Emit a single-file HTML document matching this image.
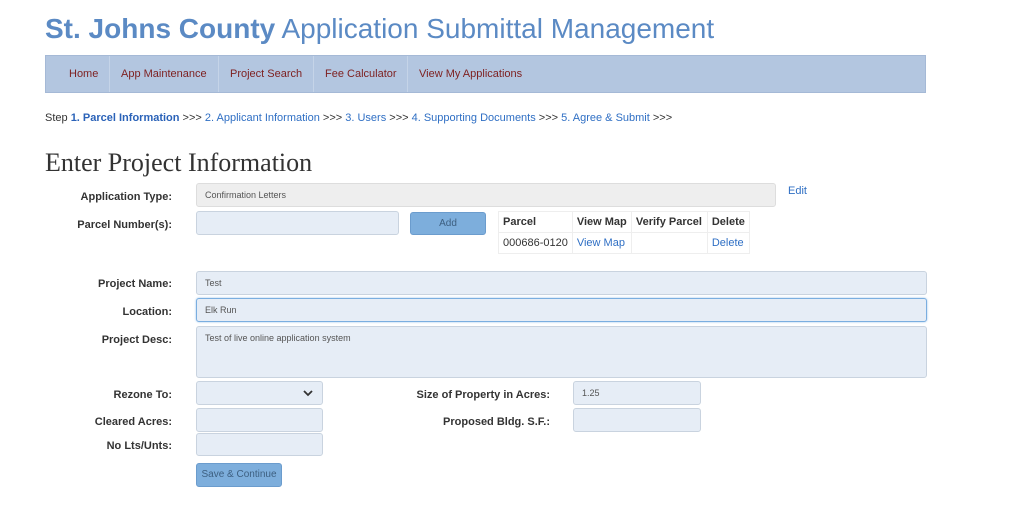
<!DOCTYPE html>
<html><head><style>
body{margin:0;width:1024px;height:507px;background:#fff;font-family:"Liberation Sans",sans-serif;position:relative;overflow:hidden}
.a{position:absolute}
.t{left:45px;top:13px;font-size:28px;color:#5b8ac4;white-space:nowrap}
.nav{left:45px;top:55px;width:881px;height:38px;background:#b3c6e0;border:1px solid #a5b9d6;box-sizing:border-box}
.nav span{position:absolute;top:12px;font-size:11px;color:#7d1f1f;white-space:nowrap}
.sep{position:absolute;top:0;width:1px;height:36px;background:#c5d4e8}
.st{left:45px;top:112px;font-size:11px;color:#333;white-space:nowrap}
.st b{color:#2a62b8}.st i{font-style:normal;color:#2f6fc4}
h1{position:absolute;left:45px;top:148px;margin:0;font:26px "Liberation Serif",serif;color:#333;white-space:nowrap}
.l{font-size:11px;font-weight:bold;color:#333;text-align:right;width:160px}
.in{background:#e6edf6;border:1px solid #c9d3df;border-radius:3px;box-sizing:border-box;font-size:9px;color:#555;padding:6px 8px}
.btn{background:#7daedc;border:1px solid #6b9ccd;border-radius:3px;box-sizing:border-box;font-size:10px;color:#3d5f80;text-align:center}
table{border-collapse:collapse;font-size:11px;white-space:nowrap}
td{border:1px solid #eee;padding:0 4px;height:20px;color:#333}
.lk{color:#2f6fc4}
</style></head><body>
<div class="a t"><b>St. Johns County</b> Application Submittal Management</div>
<div class="a nav">
<span style="left:23px">Home</span><div class="sep" style="left:63px"></div>
<span style="left:75px">App Maintenance</span><div class="sep" style="left:172px"></div>
<span style="left:184px">Project Search</span><div class="sep" style="left:267px"></div>
<span style="left:279px">Fee Calculator</span><div class="sep" style="left:361px"></div>
<span style="left:373px">View My Applications</span>
</div>
<div class="a st">Step <b>1. Parcel Information</b> &gt;&gt;&gt; <i>2. Applicant Information</i> &gt;&gt;&gt; <i>3. Users</i> &gt;&gt;&gt; <i>4. Supporting Documents</i> &gt;&gt;&gt; <i>5. Agree &amp; Submit</i> &gt;&gt;&gt;</div>
<h1>Enter Project Information</h1>
<div class="a l" style="left:12px;top:191px">Application Type:</div>
<div class="a in" style="left:196px;top:183px;width:580px;height:24px;background:#eee;border-color:#ddd">Confirmation Letters</div>
<div class="a lk" style="left:788px;top:185px;font-size:11px">Edit</div>
<div class="a l" style="left:12px;top:219px">Parcel Number(s):</div>
<div class="a in" style="left:196px;top:211px;width:203px;height:24px"></div>
<div class="a btn" style="left:410px;top:212px;width:76px;height:23px;line-height:21px">Add</div>
<table class="a" style="left:498px;top:211px">
<tr><td style="width:64px"><b>Parcel</b></td><td style="width:50px"><b>View Map</b></td><td style="width:67px"><b>Verify Parcel</b></td><td style="width:32px"><b>Delete</b></td></tr>
<tr><td>000686-0120</td><td class="lk">View Map</td><td></td><td class="lk">Delete</td></tr>
</table>
<div class="a l" style="left:12px;top:278px">Project Name:</div>
<div class="a in" style="left:196px;top:271px;width:731px;height:24px">Test</div>
<div class="a l" style="left:12px;top:306px">Location:</div>
<div class="a in" style="left:196px;top:298px;width:731px;height:24px;border-color:#7aaee0;box-shadow:0 0 2px #9cc3ea">Elk Run</div>
<div class="a l" style="left:12px;top:334px">Project Desc:</div>
<div class="a in" style="left:196px;top:326px;width:731px;height:52px">Test of live online application system</div>
<div class="a l" style="left:12px;top:389px">Rezone To:</div>
<div class="a in" style="left:196px;top:381px;width:127px;height:24px"><svg style="position:absolute;left:106px;top:8px" width="10" height="7"><path d="M1 1L5 5L9 1" stroke="#333" stroke-width="1.8" fill="none"/></svg></div>
<div class="a l" style="left:12px;top:416px">Cleared Acres:</div>
<div class="a in" style="left:196px;top:408px;width:127px;height:24px"></div>
<div class="a l" style="left:12px;top:440px">No Lts/Unts:</div>
<div class="a in" style="left:196px;top:433px;width:127px;height:23px"></div>
<div class="a btn" style="left:196px;top:463px;width:86px;height:24px;line-height:22px;white-space:nowrap">Save &amp; Continue</div>
<div class="a l" style="left:330px;top:389px;width:220px">Size of Property in Acres:</div>
<div class="a in" style="left:573px;top:381px;width:128px;height:24px">1.25</div>
<div class="a l" style="left:330px;top:416px;width:220px">Proposed Bldg. S.F.:</div>
<div class="a in" style="left:573px;top:408px;width:128px;height:24px"></div>
</body></html>
